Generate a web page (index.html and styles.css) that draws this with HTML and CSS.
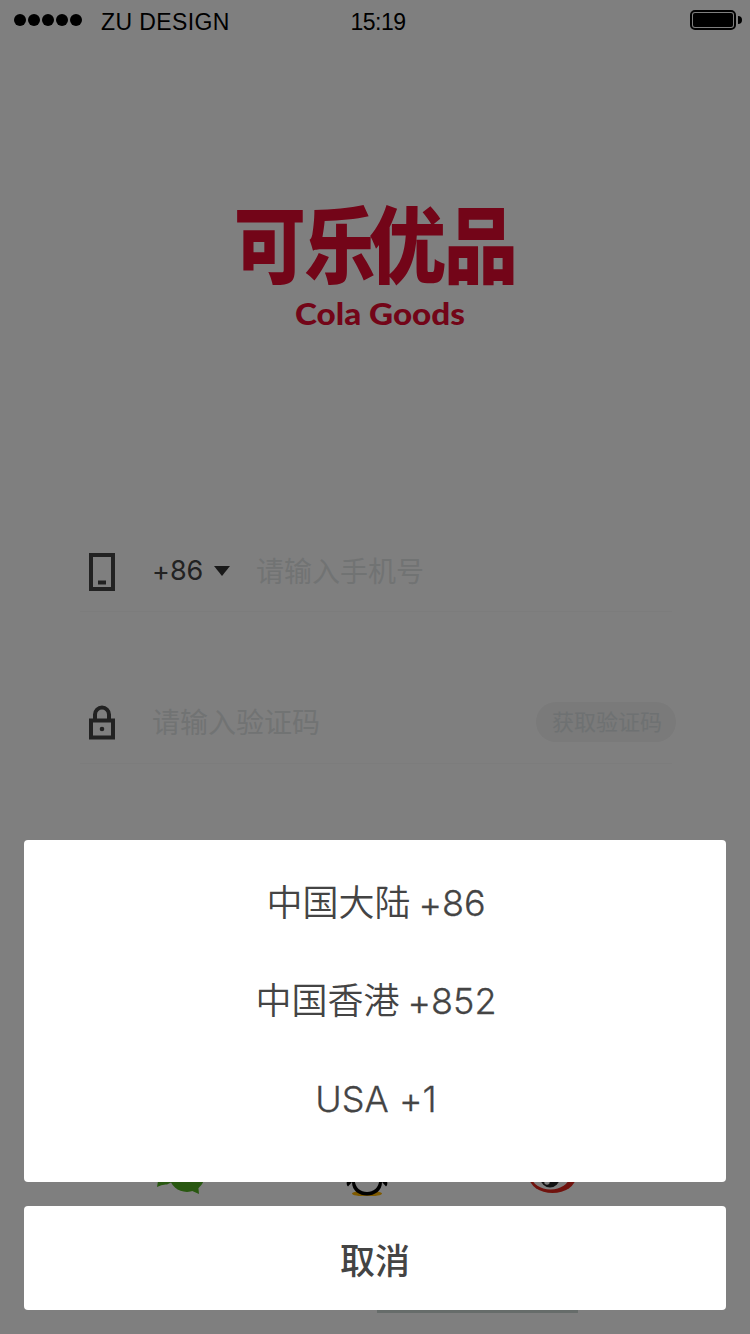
FILE: index.html
```html
<!DOCTYPE html>
<html lang="zh-CN">
<head>
<meta charset="utf-8">
<title>可乐优品</title>
<link rel="stylesheet" href="styles.css">
</head>
<body>
<div class="screen">
  <header class="status">
    <div class="carrier"><span class="dots"><i></i><i></i><i></i><i></i><i></i></span><span class="carrier-name">ZU DESIGN</span></div>
    <time class="clock">15:19</time>
    <svg class="battery" width="52" height="20" viewBox="0 0 52 20"><rect x="1" y="1" width="44" height="18" rx="4" fill="none" stroke="#000" stroke-width="2"/><rect x="3" y="3" width="40" height="14" rx="2"/><path d="M48 6a4 4 0 0 1 0 8z"/></svg>
  </header>
  <h1 class="logo">
    <svg width="290" height="136" viewBox="0 0 290 136">
      <g class="logo-cn">
        <text transform="translate(3 77) scale(.97 1.14)">可</text>
        <text transform="translate(73 77) scale(.97 1.14)">乐</text>
        <text transform="translate(138 77) scale(1.04 1.14)">优</text>
        <text transform="translate(213 77) scale(1 1.14)">品</text>
      </g>
      <text class="logo-en" x="64" y="125" textLength="170" lengthAdjust="spacingAndGlyphs">Cola Goods</text>
    </svg>
  </h1>
  <form class="form">
    <div class="field">
      <svg class="field-icon" width="26" height="40" viewBox="0 0 26 40"><path fill="none" stroke="#444" stroke-width="4" d="M2 4h22v34H2z"/><path fill="#444" d="M9 29.500h8v4H9z"/></svg>
      <span class="code"><span class="plus">+</span>86</span>
      <svg class="caret" width="16" height="10" viewBox="0 0 16 10"><path fill="#333" d="M0 0h16L8 10z"/></svg>
      <span class="hint">请输入手机号</span>
    </div>
    <div class="field field-verify">
      <svg class="field-icon" width="26" height="40" viewBox="0 0 26 40"><path fill="none" stroke="#444" stroke-width="4" d="M2 18.500h22v17H2zM6 17v-4.500a7 7 0 0 1 14 0V17"/><circle cx="13" cy="27" r="2.300" fill="#444"/></svg>
      <span class="hint">请输入验证码</span>
      <span class="get-code">获取验证码</span>
    </div>
  </form>
  <div class="social">
    <svg width="50" height="44" viewBox="0 0 50 44"><g fill="#52b022"><ellipse cx="19" cy="15" rx="19" ry="15"/><path d="M4 23L2 35q5-3 10-2.500l6-3z"/><ellipse cx="32" cy="25" rx="17" ry="15"/><path d="M35 38l9 4-1-10z"/></g></svg>
    <svg width="44" height="48" viewBox="0 0 44 48"><ellipse cx="23" cy="45.500" rx="15" ry="3" fill="#ffb400"/><path d="M9 18C9-5 37-5 37 18l6 15q1 4-1 5.500l-4-4.500C38 52 8 52 8 34l-4 4.500q-2-1.500-1-5.500z"/><path fill="#fff" d="M11 29q12 7 24 0c3 20-27 20-24 0z"/></svg>
    <svg width="50" height="44" viewBox="0 0 50 44"><ellipse cx="25.500" cy="24.500" rx="23.500" ry="16.500" fill="#e1251b"/><ellipse cx="23.500" cy="25" rx="18.500" ry="12.500" fill="#fff"/><circle cx="23" cy="26" r="9.500" fill="#222"/><circle cx="20" cy="30" r="2.700" fill="#fff"/></svg>
  </div>
  <div class="base-line"></div>

  <div class="mask">
    <div class="sheet">
      <div class="option">中国大陆 <span class="num"><span class="plus">+</span>86</span></div>
      <div class="option">中国香港 <span class="num"><span class="plus">+</span>852</span></div>
      <div class="option"><span class="num">USA <span class="plus">+</span>1</span></div>
    </div>
    <div class="sheet cancel">取消</div>
  </div>
</div>
</body>
</html>
```

FILE: styles.css
```css
* { box-sizing: border-box; }
body { margin: 0; font-family: Inter, "Noto Sans CJK SC", sans-serif; }
.screen { position: relative; width: 750px; height: 1334px; overflow: hidden; background: #fff; display: flex; flex-direction: column; }
.status { height: 40px; flex: none; display: grid; grid-template-columns: 1fr auto 1fr; align-items: center; padding: 0 8px 0 14px; font-family: "Liberation Sans", sans-serif; color: #000; }
.carrier { display: flex; align-items: center; gap: 19px; }
.dots { display: flex; gap: 2px; }
.dots i { width: 12px; height: 12px; border-radius: 50%; background: #000; }
.carrier-name { font-size: 23px; letter-spacing: .4px; padding-top: 4px; white-space: nowrap; }
.clock { font-size: 23px; letter-spacing: -.5px; padding-top: 4px; }
.battery { justify-self: end; }
.logo { margin: 160px 0 0 231px; height: 136px; flex: none; }
.logo svg { display: block; overflow: visible; }
.logo-cn { font: 900 74px "Noto Sans CJK SC", sans-serif; fill: #e60a30; }
.logo-en { font: 900 31px Lato, sans-serif; fill: #e60a30; }
.form { margin: 196px 78px 0 80px; flex: none; display: flex; flex-direction: column; gap: 72px; }
.field { height: 80px; border-bottom: 1px solid #f9f9f9; display: flex; align-items: center; padding: 0 0 2px 9px; font-size: 28px; }
.field-verify { padding-bottom: 4px; }
.field-icon { margin-right: 37px; }
.code { width: 52px; font-size: 27px; line-height: 34px; color: #444; }
.plus { display: inline-block; line-height: 1; transform: translateY(.02em); }
.caret { margin-left: 10px; }
.hint { margin-left: 26px; line-height: 38px; padding-bottom: 2px; color: #e3e6e7; font-family: "Noto Sans CJK SC", sans-serif; }
.field-verify .hint { margin-left: 0; }
.get-code { margin-left: auto; margin-right: -4px; width: 140px; height: 40px; border-radius: 20px; background: #f4f4f4; color: #dde3e4; font-size: 22px; line-height: 37px; padding-left: 2px; text-align: center; font-family: "Noto Sans CJK SC", sans-serif; }
.social { margin: 384px 173px 0 155px; flex: none; display: flex; justify-content: space-between; align-items: flex-end; height: 48px; }
.base-line { width: 201px; height: 3px; background: #cdd8d4; margin: 114px 0 0 377px; flex: none; }
.mask { position: absolute; inset: 0; background: rgba(0, 0, 0, .5); display: flex; flex-direction: column; justify-content: flex-end; gap: 24px; padding: 24px; }
.sheet { background: #fff; border-radius: 4px; color: #444; text-align: center; padding: 11px 0 33px 2px; height: 342px; font: 400 36px/98px "Noto Sans CJK SC", sans-serif; }
.option { height: 98px; font-weight: 350; white-space: pre; }
.num { font-family: Inter, sans-serif; font-weight: 300; -webkit-text-stroke: .3px #444; }
.cancel { height: 104px; padding: 0; font: 500 35px/105px "Noto Sans CJK SC", sans-serif; }
```
